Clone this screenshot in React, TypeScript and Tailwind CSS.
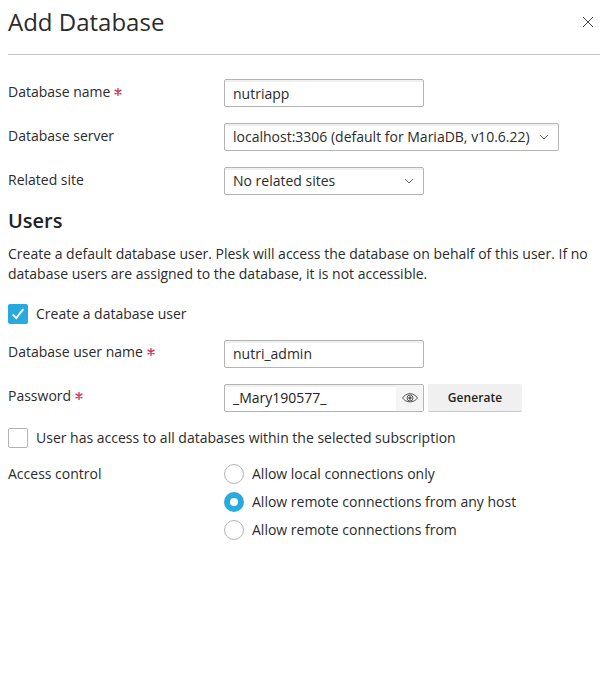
import React from "react";

function Star() {
  return (
    <svg width="8" height="8" viewBox="0 0 8 8" className="relative -top-px ml-1 inline-block" stroke="#d92e50" strokeWidth="1.35" strokeLinecap="round">
      <path d="M4 .6v6.8M1 2.2l6 3.6M7 2.2L1 5.8" />
    </svg>
  );
}

function Chevron() {
  return (
    <svg width="10" height="6" viewBox="0 0 10 6" fill="none" stroke="#666" strokeWidth="1">
      <path d="M1 1l4 4 4-4" />
    </svg>
  );
}

function Row({ label, required, raised, className, children }: { label: string; required?: boolean; raised?: boolean; className: string; children: React.ReactNode }) {
  return (
    <div className={`flex h-7 ${className}`}>
      <div className={`w-[216px] shrink-0 ${raised ? "pt-[2px]" : "pt-[3px]"}`}>
        {label}
        {required && <Star />}
      </div>
      {children}
    </div>
  );
}

const field = "h-7 w-[200px] rounded-xs border border-[#b4b4b4] bg-white px-2 pt-[3px] shadow-[inset_0_2px_0_#f0f0f0]";
const select = "flex h-7 items-center justify-between rounded-xs border border-[#b4b4b4] bg-white pl-2 pr-[9px] shadow-[inset_0_2px_0_#f0f0f0]";

function Radio({ label, checked }: { label: string; checked?: boolean }) {
  return (
    <div className="flex h-5 items-center gap-2">
      <span className={checked ? "flex size-5 items-center justify-center rounded-full bg-[#28aade]" : "size-5 rounded-full border border-[#b4b4b4] bg-white"}>
        {checked && <span className="size-2 rounded-full bg-white" />}
      </span>
      <span>{label}</span>
    </div>
  );
}

export default function App() {
  return (
    <main className="h-[696px] w-[609px] overflow-hidden bg-white pl-2 pr-[9px] font-['Open_Sans',sans-serif] text-sm leading-5 text-[#2b2b2b]">
      <header className="flex h-[55px] items-start justify-between border-b border-[#c8c8c8]">
        <h1 className="pt-[6px] text-2xl leading-8">Add Database</h1>
        <svg width="10" height="10" viewBox="0 0 10 10" className="mr-[7px] mt-[17px]" stroke="#444" strokeWidth="1">
          <path d="M0 0l10 10M10 0L0 10" />
        </svg>
      </header>
      <Row label="Database name" required className="mt-6"><div className={`${field} pt-[4px]`}>nutriapp</div></Row>
      <Row label="Database server" className="mt-4"><div className={`${select} w-[335px]`}>localhost:3306 (default for MariaDB, v10.6.22)<Chevron /></div></Row>
      <Row label="Related site" className="mt-4"><div className={`${select} w-[200px]`}>No related sites<Chevron /></div></Row>
      <h2 className="mt-3 text-xl leading-7 font-semibold text-[#222]">Users</h2>
      <p className="mt-[9px] whitespace-nowrap">Create a default database user. Plesk will access the database on behalf of this user. If no<br />database users are assigned to the database, it is not accessible.</p>
      <div className="mt-5 flex items-center gap-2">
        <span className="flex size-5 items-center justify-center rounded-xs bg-[#28aade]">
          <svg width="12" height="12" viewBox="0 0 12 12" fill="none" stroke="white" strokeWidth="2"><path d="M.7 6.5l3.6 3.6L11.3 1" /></svg>
        </span>
        Create a database user
      </div>
      <Row label="Database user name" required raised className="mt-4"><div className={field}>nutri_admin</div></Row>
      <Row label="Password" required raised className="mt-4">
        <div className={`${field} flex justify-between text-[#222]`}>
          _Mary190577_
          <span className="-mr-2 -mt-[3px] flex h-[26px] w-[27px] items-center justify-center bg-[#f5f5f5]">
            <svg width="16" height="12" viewBox="0 0 16 12" fill="none" stroke="#555" strokeWidth="1"><path d="M.6 6C4 .2 12 .2 15.4 6 12 11.2 4 11.2.6 6z" /><circle cx="8" cy="6" r="3" /><circle cx="8" cy="6" r="1.2" fill="#555" /></svg>
          </span>
        </div>
        <div className="ml-1 flex w-[94px] items-center justify-center rounded-xs border-b border-[#c8c8c8] bg-[#f0f0f0] text-xs font-semibold tracking-[0.05px] text-[#222]">Generate</div>
      </Row>
      <div className="mt-4 flex items-center gap-2">
        <span className="size-5 rounded-xs border border-[#b4b4b4]" />
        User has access to all databases within the selected subscription
      </div>
      <div className="mt-4 flex">
        <div className="w-[216px]">Access control</div>
        <div className="flex flex-col gap-2">
          <Radio label="Allow local connections only" />
          <Radio label="Allow remote connections from any host" checked />
          <Radio label="Allow remote connections from" />
        </div>
      </div>
    </main>
  );
}
